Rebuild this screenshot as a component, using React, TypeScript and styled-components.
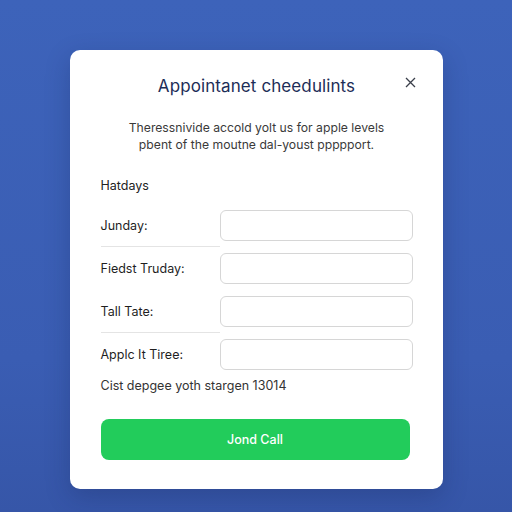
import styled, { createGlobalStyle } from 'styled-components'

const GlobalStyle = createGlobalStyle`
  html, body {
    margin: 0;
    padding: 0;
  }
  body {
    font-family: Inter, "Noto Sans", "Liberation Sans", sans-serif;
    background: #3c61b8;
  }
`

const Page = styled.div`
  width: 512px;
  height: 512px;
  background: linear-gradient(180deg, #3d63ba 0%, #3a5db3 70%, #3656a8 100%);
  display: flex;
  justify-content: center;
  padding-top: 50px;
  box-sizing: border-box;
`

const Card = styled.div`
  width: 373px;
  height: 439px;
  background: #fff;
  border-radius: 10px;
  box-shadow: 0 8px 24px rgba(20, 30, 80, 0.25);
  box-sizing: border-box;
  padding: 24px 30px 0 31px;
  position: relative;
  display: flex;
  flex-direction: column;
`

const Title = styled.h2`
  margin: 0;
  font-size: 17px;
  font-weight: 400;
  color: #1d2d57;
  text-align: center;
  line-height: 24px;
  letter-spacing: 0.1px;
`

const Close = styled.button`
  position: absolute;
  top: 24px;
  right: 24px;
  width: 16px;
  height: 16px;
  border: 0;
  padding: 0;
  background: none;
  color: #3a3f4a;
  display: flex;
  align-items: center;
  justify-content: center;
`

const Description = styled.p`
  margin: 21px 0 0;
  font-size: 12.2px;
  line-height: 17px;
  color: #3a3a3a;
  text-align: center;
`

const Section = styled.div`
  margin-top: 24px;
  font-size: 12.5px;
  color: #222;
  line-height: 17px;
`

const Rows = styled.div`
  margin-top: 10px;
  display: flex;
  flex-direction: column;
`

const Row = styled.div`
  display: flex;
  align-items: stretch;
  height: 43px;
`

const LabelCell = styled.div<{ $divider?: boolean }>`
  flex: 1;
  display: flex;
  align-items: center;
  border-bottom: 1px solid ${p => (p.$divider ? '#e4e4e4' : 'transparent')};
  box-sizing: border-box;
`

const Label = styled.label`
  font-size: 12.5px;
  color: #1f1f1f;
`

const Input = styled.input`
  align-self: center;
  width: 193px;
  height: 31px;
  box-sizing: border-box;
  border: 1px solid #d6d6d6;
  border-radius: 6px;
  background: #fff;
  outline: none;
`

const Note = styled.div`
  margin-top: 1px;
  font-size: 12.5px;
  color: #333;
  line-height: 17px;
`

const Button = styled.button`
  margin-top: 25px;
  width: 309px;
  height: 41px;
  border: 0;
  border-radius: 8px;
  background: #22cc5b;
  color: #fff;
  font-family: inherit;
  font-size: 12.5px;
  font-weight: 500;
`

const rows = [
  { label: 'Junday:', divider: true },
  { label: 'Fiedst Truday:', divider: false },
  { label: 'Tall Tate:', divider: true },
  { label: 'Applc It Tiree:', divider: false },
]

export default function App() {
  return (
    <>
      <GlobalStyle />
      <Page>
        <Card>
          <Title>Appointanet cheedulints</Title>
          <Close aria-label="close">
            <svg width="11" height="11" viewBox="0 0 11 11" fill="none" stroke="currentColor" strokeWidth="1.3">
              <path d="M1 1 L10 10 M10 1 L1 10" />
            </svg>
          </Close>
          <Description>
            Theressnivide accold yolt us for apple levels
            <br />
            pbent of the moutne dal-youst ppppport.
          </Description>
          <Section>Hatdays</Section>
          <Rows>
            {rows.map(r => (
              <Row key={r.label}>
                <LabelCell $divider={r.divider}>
                  <Label>{r.label}</Label>
                </LabelCell>
                <Input />
              </Row>
            ))}
          </Rows>
          <Note>Cist depgee yoth stargen 13014</Note>
          <Button>Jond Call</Button>
        </Card>
      </Page>
    </>
  )
}
